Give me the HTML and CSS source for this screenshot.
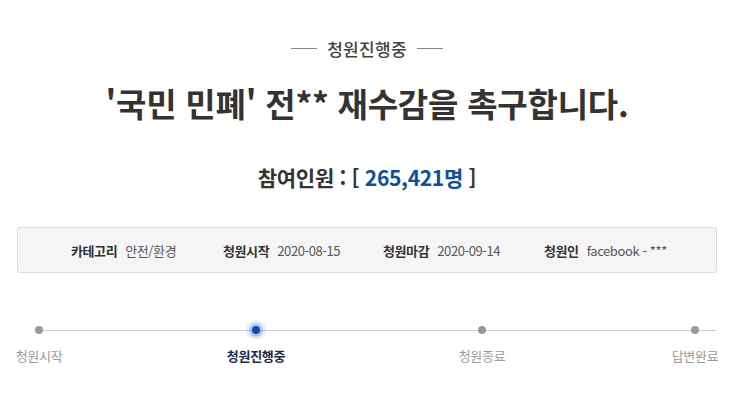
FILE: index.html
```html
<!DOCTYPE html>
<html lang="ko">
<head>
<meta charset="utf-8">
<link rel="stylesheet" href="styles.css">
</head>
<body>
<div class="page">
  <div class="status"><span class="dash"></span><span class="status-text">청원진행중</span><span class="dash"></span></div>
  <h1 class="title">'국민 민폐' 전** 재수감을 촉구합니다.</h1>
  <p class="count">참여인원 : [ <span class="num">265,421명</span> ]</p>
  <ul class="info">
    <li><b>카테고리</b><span>안전/환경</span></li>
    <li><b>청원시작</b><span>2020-08-15</span></li>
    <li><b>청원마감</b><span>2020-09-14</span></li>
    <li><b>청원인</b><span>facebook - ***</span></li>
  </ul>
  <ol class="steps">
    <li class="step"><i class="dot"></i><span>청원시작</span></li>
    <li class="step active"><i class="dot"></i><span>청원진행중</span></li>
    <li class="step"><i class="dot"></i><span>청원종료</span></li>
    <li class="step"><i class="dot"></i><span>답변완료</span></li>
  </ol>
</div>
</body>
</html>
```
FILE: styles.css
```css
* { box-sizing: border-box; }
html, body { margin: 0; padding: 0; background: #fff; }
body { font-family: "Noto Sans CJK KR", "Noto Sans", sans-serif; color: #333; }
.page { width: 700px; margin-left: 17px; padding-top: 36px; }

.status { display: flex; justify-content: center; align-items: center; gap: 10px; height: 24px; }
.dash { width: 26px; height: 1px; background: #888; }
.status-text { font-size: 17px; color: #444; font-weight: 500; letter-spacing: 0.3px; }

.title { margin: 20px 0 0; text-align: center; font-size: 33px; font-weight: 700; color: #333; letter-spacing: -0.2px; line-height: 46px; }

.count { margin: 35px 0 0; text-align: center; font-size: 21px; font-weight: 700; color: #333; line-height: 32px; letter-spacing: -0.3px; }
.count .num { color: #0b4ea2; }

.info { list-style: none; margin: 34px 0 0; padding: 0 0 0 53px; height: 46px; display: flex; align-items: center; background: #f5f5f5; border: 1px solid #dcdcdc; border-radius: 3px; font-size: 13px; letter-spacing: -0.4px; }
.info li { display: flex; gap: 8px; }
.info li:nth-child(1) { width: 152px; }
.info li:nth-child(2) { width: 160px; }
.info li:nth-child(3) { width: 161px; }
.info b { color: #333; font-weight: 700; }
.info span { color: #555; }

.steps { list-style: none; margin: 0; padding: 0; margin-top: 50px; position: relative; display: grid; grid-template-columns: 218px 225px 213px 44px; margin-left: -1px; }
.steps::before { content: ""; position: absolute; left: 22px; right: 1px; top: 7px; height: 1px; background: #c8c8c8; }
.step { width: 46px; display: flex; flex-direction: column; align-items: center; position: relative; }
.step:nth-child(2) { width: 44px; margin-left: 0; }
.step .dot { width: 8px; height: 8px; border-radius: 50%; background: #999; margin-top: 3px; }
.step span { margin-top: 12px; font-size: 13px; color: #9a9a9a; white-space: nowrap; letter-spacing: -0.3px; }
.step.active .dot { background: #0b4ea2; box-shadow: 0 0 0 3px rgba(60,130,240,0.35), 0 0 0 6px rgba(60,130,240,0.12); }
.step.active span { color: #1d2b4c; font-weight: 700; }
```
